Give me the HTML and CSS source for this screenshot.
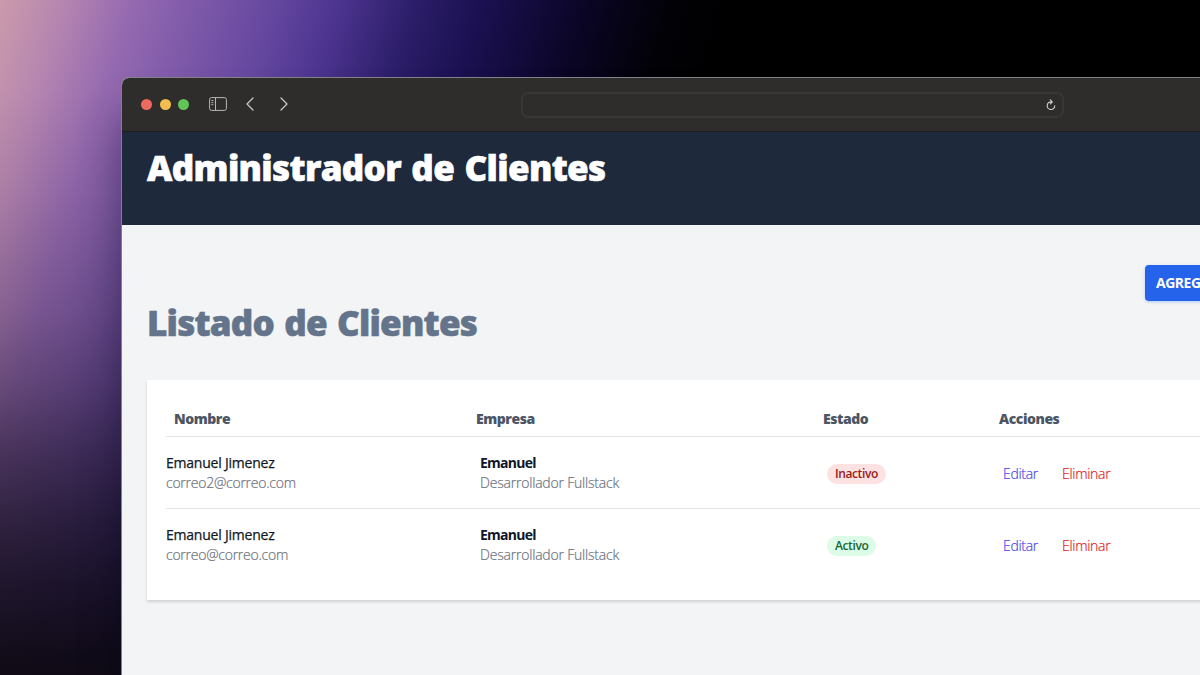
FILE: index.html
```html
<!DOCTYPE html>
<html lang="es">
<head>
<meta charset="utf-8">
<title>Administrador de Clientes</title>
<link rel="stylesheet" href="styles.css">
</head>
<body>
<div class="backdrop">
<div class="window">
  <div class="toolbar">
    <div class="lights"><span class="light red"></span><span class="light yellow"></span><span class="light green"></span></div>
    <svg class="icon-sidebar" width="18" height="14" viewBox="0 0 18 14" fill="none" stroke="#b9b8b7"><rect x=".6" y=".6" width="16.8" height="12.8" rx="2"/><path d="M6.5 .6v12.8M2.4 3.5h2M2.4 5.6h2M2.4 7.7h2"/></svg>
    <svg class="icon-back" width="8" height="14" viewBox="0 0 8 14" fill="none" stroke="#c9c8c7" stroke-width="1.3" stroke-linecap="round" stroke-linejoin="round"><path d="M7 1L1 7l6 6"/></svg>
    <svg class="icon-next" width="8" height="14" viewBox="0 0 8 14" fill="none" stroke="#c9c8c7" stroke-width="1.3" stroke-linecap="round" stroke-linejoin="round"><path d="M1 1l6 6-6 6"/></svg>
    <div class="address"><svg width="10" height="12" viewBox="0 0 10 12" fill="none" stroke="#d4d3d2" stroke-width="1.1" stroke-linecap="round"><path d="M5.6 2.9H5a3.8 3.8 0 1 0 3.8 3.8M4.3 .8l2 2.1-2 2"/></svg></div>
  </div>
  <header class="header"><h1 class="title">Administrador de Clientes</h1></header>
  <main class="main">
    <div class="actions-bar"><button class="add">AGREG</button></div>
    <h2 class="subtitle">Listado de Clientes</h2>
    <section class="card">
      <div class="row head"><span class="first">Nombre</span><span>Empresa</span><span>Estado</span><span>Acciones</span></div>
      <div class="row">
        <div class="person"><p class="name">Emanuel Jimenez</p><p class="mail">correo2@correo.com</p></div>
        <div class="cell"><p class="company">Emanuel</p><p class="role">Desarrollador Fullstack</p></div>
        <div class="cell"><span class="badge off">Inactivo</span></div>
        <div class="cell links"><a class="edit">Editar</a><a class="delete">Eliminar</a></div>
      </div>
      <div class="row">
        <div class="person"><p class="name">Emanuel Jimenez</p><p class="mail">correo@correo.com</p></div>
        <div class="cell"><p class="company">Emanuel</p><p class="role">Desarrollador Fullstack</p></div>
        <div class="cell"><span class="badge on">Activo</span></div>
        <div class="cell links"><a class="edit">Editar</a><a class="delete">Eliminar</a></div>
      </div>
    </section>
  </main>
</div>
</div>
</body>
</html>
```
FILE: styles.css
```css
* { box-sizing: border-box; margin: 0; padding: 0; }
body { font-family: "Open Sans", "Noto Sans", sans-serif; overflow: hidden; }
.backdrop {
  width: 1200px; height: 675px; padding: 77px 0 0 121px; overflow: hidden;
  background:
    linear-gradient(180deg, rgba(12,8,20,0) 90px, rgba(12,8,20,.07) 194px, rgba(12,8,20,.2) 310px, rgba(12,8,20,.36) 388px, rgba(12,8,20,.54) 452px, rgba(12,8,20,.7) 517px, rgba(12,8,20,.83) 581px, rgba(12,8,18,.94) 650px, rgba(12,8,16,.96) 675px),
    linear-gradient(107deg, #cb9aab 0, #b686b0 60px, #9469b0 128px, #7c58a8 195px, #6648a0 260px, #4c348f 325px, #2b1d68 400px, #1a1050 465px, #0b0526 560px, #020106 645px, #000 710px);
}
.window {
  width: 1400px; height: 700px; border: 1px solid #83808a; border-radius: 8px 0 0 0; overflow: hidden;
  background: #f2f4f6; box-shadow: 0 38px 46px -4px rgba(0,0,20,.42);
}
.toolbar { display: flex; align-items: center; height: 54px; padding-left: 19px; background: #2e2d2b; border-bottom: 1px solid #1a1d21; }
.lights { display: flex; gap: 7.3px; margin-right: 19.4px; }
.light { width: 11.3px; height: 11.3px; border-radius: 50%; }
.red { background: #ec6a5f; }
.yellow { background: #f4bd4f; }
.green { background: #61c454; }
.icon-sidebar, .icon-back, .icon-next { margin-bottom: 1px; }
.icon-back { margin-left: 19px; }
.icon-next { margin-left: 26px; }
.address { display: flex; align-items: center; justify-content: flex-end; width: 543px; height: 26px; margin: 1px 0 0 233px; padding-right: 6px; border: 2px solid #383735; border-radius: 7px; }
.header { height: 93px; padding: 12px 25px; background: #1e293b; }
.title { font-size: 35px; line-height: 48px; font-weight: 800; color: #fff; letter-spacing: -.68px; word-spacing: 2px; -webkit-text-stroke: .6px #fff; white-space: nowrap; }
.main { padding: 40px 0 0 25px; }
.actions-bar { display: flex; padding-left: 997.5px; }
.add { flex: none; width: 160px; height: 36px; padding: 0 11.5px; border: 0; border-radius: 4px; background: #2563eb; color: #fff; text-align: left; font: 700 14px/36px "Open Sans", sans-serif; letter-spacing: -.5px; box-shadow: 0 1px 3px rgba(37,99,235,.3); }
.subtitle { margin-top: -2px; font-size: 35px; line-height: 48px; font-weight: 800; color: #64748b; letter-spacing: -.8px; word-spacing: 2px; -webkit-text-stroke: .6px #64748b; white-space: nowrap; }
.card { width: 1300px; height: 220px; margin-top: 33px; padding: 20px 19px; background: #fff; box-shadow: 0 2px 3px rgba(0,0,0,.14); }
.row { display: grid; grid-template-columns: 310px 347px 176px 1fr; align-items: center; height: 72px; font-size: 14px; line-height: 20px; white-space: nowrap; }
.row + .row { border-top: 1px solid #e3e5e8; height: 72px; padding-top: 2px; }
.person, .row > div:nth-child(2) { margin-top: -1px; }
.head { height: 36px; padding-top: 2px; font-weight: 800; color: #4b5563; letter-spacing: -.45px; }
.first { padding-left: 8px; }
.cell { padding-left: 4px; }
.name { color: #111827; letter-spacing: -.22px; -webkit-text-stroke: .25px #111827; }
.company { font-weight: 700; color: #0f172a; letter-spacing: -.75px; }
.mail, .role { font-weight: 300; color: #6b7280; letter-spacing: -.2px; -webkit-text-stroke: .2px #6b7280; }
.mail { letter-spacing: -.25px; }
.badge { display: inline-block; height: 20px; padding: 0 8px; border-radius: 10px; font-size: 12px; font-weight: 600; letter-spacing: -.4px; }
.off { background: #fee2e2; color: #991b1b; }
.on { background: #dcfce7; color: #166534; }
.links { display: flex; gap: 24px; font-weight: 300; letter-spacing: -.3px; -webkit-text-stroke: .2px; }
.edit { color: #4f46e5; }
.delete { color: #dc2626; }
```
